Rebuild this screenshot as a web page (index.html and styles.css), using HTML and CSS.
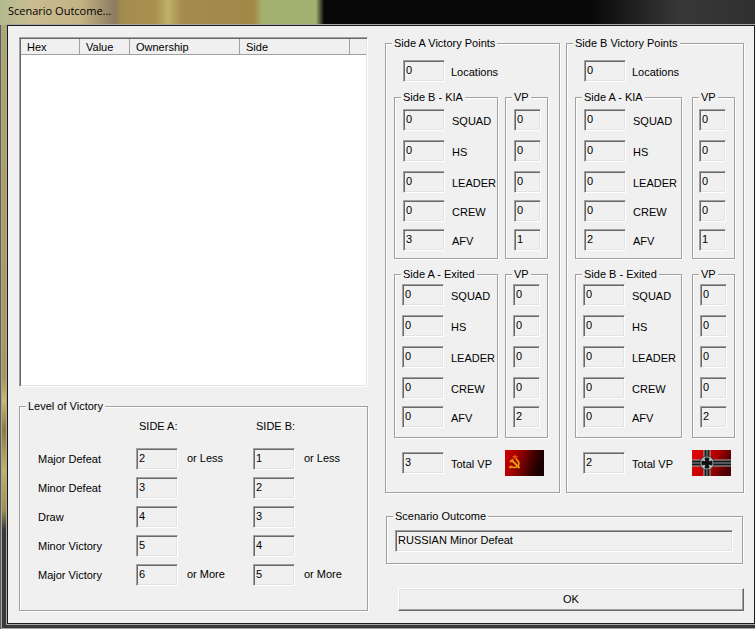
FILE: index.html
```html
<!DOCTYPE html>
<html lang="en">
<head>
    <meta charset="UTF-8">
    <meta name="viewport" content="width=device-width, initial-scale=1.0">
    <title>Scenario Outcome...</title>
    <link rel="stylesheet" href="styles.css">
</head>
<body>

    <div class="window">
        <h1 class="title">Scenario Outcome...</h1>

        <form class="client">
            <div class="left">
                <div class="list">
                    <table>
                        <thead>
                            <tr>
                                <th class="hex">Hex</th>
                                <th class="value">Value</th>
                                <th class="owner">Ownership</th>
                                <th class="owner">Side</th>
                                <th></th>
                            </tr>
                        </thead>
                        <tbody></tbody>
                    </table>
                </div>

                <fieldset class="level">
                    <legend>Level of Victory</legend>
                    <div class="levels">
                        <span></span>
                        <span class="heading">SIDE A:</span>
                        <span class="heading">SIDE B:</span>

                        <label for="a-major-defeat">Major Defeat</label>
                        <input id="a-major-defeat" value="2" readonly>
                        <span>or Less</span>
                        <input aria-label="Side B Major Defeat" value="1" readonly>
                        <span>or Less</span>

                        <label for="a-minor-defeat">Minor Defeat</label>
                        <input id="a-minor-defeat" value="3" readonly>
                        <span></span>
                        <input aria-label="Side B Minor Defeat" value="2" readonly>
                        <span></span>

                        <label for="a-draw">Draw</label>
                        <input id="a-draw" value="4" readonly>
                        <span></span>
                        <input aria-label="Side B Draw" value="3" readonly>
                        <span></span>

                        <label for="a-minor-victory">Minor Victory</label>
                        <input id="a-minor-victory" value="5" readonly>
                        <span></span>
                        <input aria-label="Side B Minor Victory" value="4" readonly>
                        <span></span>

                        <label for="a-major-victory">Major Victory</label>
                        <input id="a-major-victory" value="6" readonly>
                        <span>or More</span>
                        <input aria-label="Side B Major Victory" value="5" readonly>
                        <span>or More</span>
                    </div>
                </fieldset>
            </div>

            <div class="right">
                <div class="sides">
                    <fieldset class="side side-a">
                        <legend>Side A Victory Points</legend>
                        <div class="line">
                            <input id="a-loc" value="0" readonly>
                            <label for="a-loc">Locations</label>
                        </div>

                        <div class="groups">
                            <fieldset class="kia">
                                <legend>Side B - KIA</legend>
                                <div class="counts">
                                    <input id="a-kia-squad" value="0" readonly>
                                    <label for="a-kia-squad">SQUAD</label>
                                    <input id="a-kia-hs" value="0" readonly>
                                    <label for="a-kia-hs">HS</label>
                                    <input id="a-kia-leader" value="0" readonly>
                                    <label for="a-kia-leader">LEADER</label>
                                    <input id="a-kia-crew" value="0" readonly>
                                    <label for="a-kia-crew">CREW</label>
                                    <input id="a-kia-afv" value="3" readonly>
                                    <label for="a-kia-afv">AFV</label>
                                </div>
                            </fieldset>
                            <fieldset class="kia">
                                <legend>VP</legend>
                                <div class="counts vp">
                                    <input aria-label="SQUAD VP" value="0" readonly>
                                    <input aria-label="HS VP" value="0" readonly>
                                    <input aria-label="LEADER VP" value="0" readonly>
                                    <input aria-label="CREW VP" value="0" readonly>
                                    <input aria-label="AFV VP" value="1" readonly>
                                </div>
                            </fieldset>

                            <fieldset class="exited">
                                <legend>Side A - Exited</legend>
                                <div class="counts">
                                    <input id="a-exit-squad" value="0" readonly>
                                    <label for="a-exit-squad">SQUAD</label>
                                    <input id="a-exit-hs" value="0" readonly>
                                    <label for="a-exit-hs">HS</label>
                                    <input id="a-exit-leader" value="0" readonly>
                                    <label for="a-exit-leader">LEADER</label>
                                    <input id="a-exit-crew" value="0" readonly>
                                    <label for="a-exit-crew">CREW</label>
                                    <input id="a-exit-afv" value="0" readonly>
                                    <label for="a-exit-afv">AFV</label>
                                </div>
                            </fieldset>
                            <fieldset class="exited">
                                <legend>VP</legend>
                                <div class="counts vp">
                                    <input aria-label="SQUAD VP" value="0" readonly>
                                    <input aria-label="HS VP" value="0" readonly>
                                    <input aria-label="LEADER VP" value="0" readonly>
                                    <input aria-label="CREW VP" value="0" readonly>
                                    <input aria-label="AFV VP" value="2" readonly>
                                </div>
                            </fieldset>

                            <div class="line total">
                                <input id="a-total" value="3" readonly>
                                <label for="a-total">Total VP</label>
                            </div>
                            <svg class="flag" viewBox="0 0 39 26">
                                <defs>
                                    <linearGradient id="red-a" x2="1" y2="0.2">
                                        <stop offset="0" stop-color="#d00000"/>
                                        <stop offset="0.35" stop-color="#a00000"/>
                                        <stop offset="0.8" stop-color="#380000"/>
                                        <stop offset="1" stop-color="#180000"/>
                                    </linearGradient>
                                </defs>
                                <rect width="39" height="26" fill="url(#red-a)"/>
                                <path d="M10 4l1 2h2l-1.500 1.500.5 2-2-1-2 1 .5-2L7 6h2z" fill="#e84c10"/>
                                <path d="M11 9q4 3 2.500 6.500Q11 19 6 16.500" fill="none" stroke="#e8a010" stroke-width="1.600"/>
                                <path d="M5 12l3-2.500M7 10.500l7.500 7.500M6.500 16l-2 2" fill="none" stroke="#e8a010" stroke-width="1.800"/>
                            </svg>
                        </div>
                    </fieldset>

                    <fieldset class="side side-b">
                        <legend>Side B Victory Points</legend>
                        <div class="line">
                            <input id="b-loc" value="0" readonly>
                            <label for="b-loc">Locations</label>
                        </div>

                        <div class="groups">
                            <fieldset class="kia">
                                <legend>Side A - KIA</legend>
                                <div class="counts">
                                    <input id="b-kia-squad" value="0" readonly>
                                    <label for="b-kia-squad">SQUAD</label>
                                    <input id="b-kia-hs" value="0" readonly>
                                    <label for="b-kia-hs">HS</label>
                                    <input id="b-kia-leader" value="0" readonly>
                                    <label for="b-kia-leader">LEADER</label>
                                    <input id="b-kia-crew" value="0" readonly>
                                    <label for="b-kia-crew">CREW</label>
                                    <input id="b-kia-afv" value="2" readonly>
                                    <label for="b-kia-afv">AFV</label>
                                </div>
                            </fieldset>
                            <fieldset class="kia">
                                <legend>VP</legend>
                                <div class="counts vp">
                                    <input aria-label="SQUAD VP" value="0" readonly>
                                    <input aria-label="HS VP" value="0" readonly>
                                    <input aria-label="LEADER VP" value="0" readonly>
                                    <input aria-label="CREW VP" value="0" readonly>
                                    <input aria-label="AFV VP" value="1" readonly>
                                </div>
                            </fieldset>

                            <fieldset class="exited">
                                <legend>Side B - Exited</legend>
                                <div class="counts">
                                    <input id="b-exit-squad" value="0" readonly>
                                    <label for="b-exit-squad">SQUAD</label>
                                    <input id="b-exit-hs" value="0" readonly>
                                    <label for="b-exit-hs">HS</label>
                                    <input id="b-exit-leader" value="0" readonly>
                                    <label for="b-exit-leader">LEADER</label>
                                    <input id="b-exit-crew" value="0" readonly>
                                    <label for="b-exit-crew">CREW</label>
                                    <input id="b-exit-afv" value="0" readonly>
                                    <label for="b-exit-afv">AFV</label>
                                </div>
                            </fieldset>
                            <fieldset class="exited">
                                <legend>VP</legend>
                                <div class="counts vp">
                                    <input aria-label="SQUAD VP" value="0" readonly>
                                    <input aria-label="HS VP" value="0" readonly>
                                    <input aria-label="LEADER VP" value="0" readonly>
                                    <input aria-label="CREW VP" value="0" readonly>
                                    <input aria-label="AFV VP" value="2" readonly>
                                </div>
                            </fieldset>

                            <div class="line total">
                                <input id="b-total" value="2" readonly>
                                <label for="b-total">Total VP</label>
                            </div>
                            <svg class="flag" viewBox="0 0 39 26">
                                <defs>
                                    <linearGradient id="red-b" x2="1" y2="0.3">
                                        <stop offset="0" stop-color="#e00808"/>
                                        <stop offset="0.6" stop-color="#b80000"/>
                                        <stop offset="1" stop-color="#500000"/>
                                    </linearGradient>
                                </defs>
                                <rect width="39" height="26" fill="url(#red-b)"/>
                                <path d="M15 0v26M0 13h39" stroke="#a8acac" stroke-width="7"/>
                                <path d="M15 0v26M0 13h39" stroke="#181818" stroke-width="5"/>
                                <path d="M15 0v26M0 13h39" stroke="#909898" stroke-width="1"/>
                                <circle cx="15" cy="13" r="7" fill="#b8c0c0" stroke="#303434"/>
                                <path d="M13 8h4l-1 4 4-1v4l-4-1 1 4h-4l1-4-4 1v-4l4 1z" fill="#101010" stroke="#101010"/>
                            </svg>
                        </div>
                    </fieldset>
                </div>

                <fieldset class="outcome">
                    <legend>Scenario Outcome</legend>
                    <input aria-label="Scenario Outcome" value="RUSSIAN Minor Defeat" readonly>
                </fieldset>

                <button type="button" class="ok">OK</button>
            </div>
        </form>
    </div>

</body>
</html>
```
FILE: styles.css
```css
* {
    box-sizing: border-box;
}

body {
    margin: 0;
    font-family: "Liberation Sans", Arial, sans-serif;
    font-size: 11px;
    line-height: 13px;
    color: #000;
    background: #38383e;
}

.window {
    min-height: 100vh;
    display: flex;
    flex-direction: column;
    padding: 0 0 6px 7px;
    background: linear-gradient(#a8b078 0, #b0a468 60px, #a8985a 380px, #c8bc70 400px, #8c7c40 430px, #c0b468 470px, #a09050 510px, #38383e 530px);
    box-shadow: inset 1px -1px 0 #5c5c58, inset 2px -2px 0 #a8a8a0;
}

.title {
    height: 25px;
    margin: 0 0 0 -7px;
    padding-left: 8px;
    font: 11px/22px "Open Sans", sans-serif;
    background: linear-gradient(90deg, #b4ba90 0, #c8bc90 30px, #c4b484 80px, #8c7c60 115px, #a48c50 122px, #a89050 155px, #c0b068 168px, #a48c50 182px, #a08848 254px, #a4b070 262px, #a4b070 316px, #080808 324px, #080808 590px, #383838 680px, #303030 100%);
}

/* client area */
.client {
    flex: 1;
    display: grid;
    grid-template-columns: minmax(0, 1fr) 359px;
    gap: 17px;
    padding: 11px 10px 11px 11px;
    background: #f0f0f0;
    border: 1px solid #1c1c1c;
    outline: 1px solid #a8a8a0;
}

.left,
.right {
    display: flex;
    flex-direction: column;
}

fieldset {
    min-width: 0;
    margin: 0;
    padding: 0;
    border: 1px solid #a0a0a0;
    box-shadow: 1px 1px 0 #fff, inset 1px 1px 0 #fff;
}

legend {
    margin-left: 6px;
    padding: 0 2px;
    background: #f0f0f0;
}

/* sunken edge */
input,
.list {
    border: 1px solid;
    border-color: #a0a0a0 #fff #fff #a0a0a0;
    box-shadow: inset 1px 1px 0 #696969, inset -1px -1px 0 #e3e3e3;
}

input {
    width: 42px;
    height: 22px;
    padding: 0 3px 3px 2px;
    font: inherit;
    color: #000;
    background: #f0f0f0;
    border-radius: 0;
    outline: none;
}

/* hex list */
.list {
    flex: 1;
    min-height: 350px;
    margin-bottom: 13px;
    padding: 1px;
    background: #fff;
}

.list table {
    width: 100%;
    table-layout: fixed;
    border-collapse: separate;
    border-spacing: 0;
}

.list th {
    height: 16px;
    padding: 2px 0 0 6px;
    font-weight: normal;
    text-align: left;
    background: #f0f0f0;
    border-right: 1px solid #a0a0a0;
    border-bottom: 1px solid #a0a0a0;
}

.list th:last-child {
    border-right: none;
}

.list .hex {
    width: 59px;
}

.list .value {
    width: 50px;
}

.list .owner {
    width: 110px;
}

/* level of victory */
.level {
    margin-bottom: 1px;
}

.levels {
    display: grid;
    grid-template-columns: 98px 51px 66px 51px 1fr;
    grid-template-rows: 21px;
    row-gap: 7px;
    padding: 7px 0 24px 18px;
}

.levels .heading {
    grid-column: span 2;
    padding: 0 0 0 3px;
}

.levels .heading:nth-child(2) {
    grid-column: 2 / span 2;
}

.levels label {
    padding-top: 5px;
}

.levels span {
    padding-top: 4px;
}

/* victory points */
.sides {
    display: grid;
    grid-template-columns: 175fr 178fr;
    gap: 6px;
}

.side-a {
    padding: 10px 11px 16px 8px;
}

.side-b {
    padding: 10px 8px 16px 8px;
}

.side > legend,
.outcome > legend {
    margin-left: -2px;
}

.line {
    display: flex;
    gap: 6px;
    padding-left: 9px;
}

.line label {
    padding-top: 6px;
}

.groups {
    display: grid;
    grid-template-columns: 1fr 43px;
    gap: 9px 7px;
    margin-top: 9px;
}

.side-b .groups {
    column-gap: 10px;
}

.counts {
    display: grid;
    grid-template-columns: 49px 1fr;
    align-items: start;
}

.counts label {
    padding-top: 6px;
}

.kia .counts {
    grid-template-rows: 31px 31px 29px 29px 22px;
    padding: 5px 0 7px 8px;
}

.exited .counts {
    grid-template-rows: 31px 31px 31px 29px 22px;
    padding: 3px 0 9px 7px;
}

.counts.vp {
    grid-template-columns: 1fr;
}

.side-b .kia .vp {
    padding-left: 6px;
}

.vp input {
    width: 27px;
}

.line.total {
    gap: 7px;
    padding: 5px 0 0 8px;
}

.flag {
    width: 39px;
    height: 26px;
    margin-top: 3px;
}

.outcome {
    margin: 17px 1px 0;
    padding: 7px 9px 11px 8px;
}

.outcome input {
    display: block;
    width: 100%;
}

.ok {
    height: 23px;
    margin: 24px 0 0 13px;
    padding: 0;
    font: inherit;
    color: #000;
    background: #f0f0f0;
    border: 1px solid;
    border-color: #fff #696969 #696969 #fff;
    border-radius: 0;
    box-shadow: inset -1px -1px 0 #a0a0a0, inset 1px 1px 0 #e3e3e3;
}
```
